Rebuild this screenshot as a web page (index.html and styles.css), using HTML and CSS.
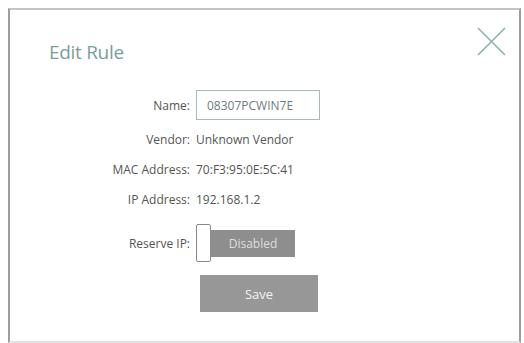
FILE: index.html
```html
<!DOCTYPE html>
<html lang="en">
<head>
    <meta charset="UTF-8">
    <meta name="viewport" content="width=device-width, initial-scale=1.0">
    <title>Edit Rule</title>
    <link rel="stylesheet" href="styles.css">
</head>
<body>
    <div class="dialog">
        <div class="dialog-header">
            <h2 class="dialog-title">Edit Rule</h2>
            <span class="close-button">
                <svg width="29" height="29" viewBox="0 0 29 29">
                    <path d="M1 1 L28 28 M28 1 L1 28" stroke="#8db3ad" stroke-width="1.6" fill="none"/>
                </svg>
            </span>
        </div>
        <div class="form">
            <div class="row row-name">
                <label class="label">Name:</label>
                <div class="value"><input class="text-input" type="text" value="08307PCWIN7E"></div>
            </div>
            <div class="row">
                <span class="label">Vendor:</span>
                <span class="value">Unknown Vendor</span>
            </div>
            <div class="row">
                <span class="label">MAC Address:</span>
                <span class="value">70:F3:95:0E:5C:41</span>
            </div>
            <div class="row">
                <span class="label">IP Address:</span>
                <span class="value">192.168.1.2</span>
            </div>
            <div class="row row-reserve">
                <span class="label">Reserve IP:</span>
                <div class="value toggle">
                    <span class="toggle-knob"></span>
                    <span class="toggle-text">Disabled</span>
                </div>
            </div>
        </div>
        <div class="actions">
            <button class="save-button">Save</button>
        </div>
    </div>
</body>
</html>
```

FILE: styles.css
```css
body {
    margin: 0;
    background-color: #ffffff;
    font-family: "Open Sans", Arial, sans-serif;
}

.dialog {
    box-sizing: border-box;
    margin: 8px 3px 0 8px;
    height: 335px;
    border: 2px solid #9d9d9d;
    border-top-color: #c4c4c4;
    border-bottom-color: #e2e2e2;
    background-color: #fff;
}

.dialog-header {
    display: flex;
    justify-content: space-between;
    align-items: flex-start;
    padding: 20px 13px 0 39px;
}

.dialog-title {
    margin: 0;
    padding-top: 9px;
    font-size: 19px;
    font-weight: 400;
    color: #7b9e9c;
    letter-spacing: -0.3px;
}

.close-button {
    display: block;
    margin-top: -3px;
    cursor: pointer;
}

.form {
    display: flex;
    flex-direction: column;
    margin-top: 24px;
    font-size: 12px;
    color: #555;
}

.row {
    display: grid;
    grid-template-columns: 180px auto;
    column-gap: 6px;
    align-items: center;
    height: 30px;
}

.row-name {
    height: 32px;
    margin-bottom: 3px;
}

.label {
    text-align: right;
}

.text-input {
    box-sizing: border-box;
    width: 124px;
    height: 30px;
    padding: 0 10px;
    border: 1px solid #a6b9b8;
    font-family: inherit;
    font-size: 12px;
    color: #6b7d7d;
    outline: none;
}

.row-reserve {
    height: 40px;
    margin-top: 9px;
}

.toggle {
    display: flex;
    align-items: center;
}

.toggle-knob {
    box-sizing: border-box;
    width: 15px;
    height: 38px;
    border: 1px solid #8a8a8a;
    border-radius: 2px;
    background-color: #fff;
}

.toggle-text {
    display: flex;
    align-items: center;
    justify-content: center;
    width: 84px;
    height: 27px;
    background-color: #8e8e8e;
    color: #dedede;
    font-size: 12px;
}

.actions {
    display: flex;
    padding-left: 190px;
    margin-top: 12px;
}

.save-button {
    width: 118px;
    height: 37px;
    border: none;
    background-color: #979797;
    color: #f4f4f4;
    font-family: inherit;
    font-size: 13px;
    cursor: pointer;
}
```
